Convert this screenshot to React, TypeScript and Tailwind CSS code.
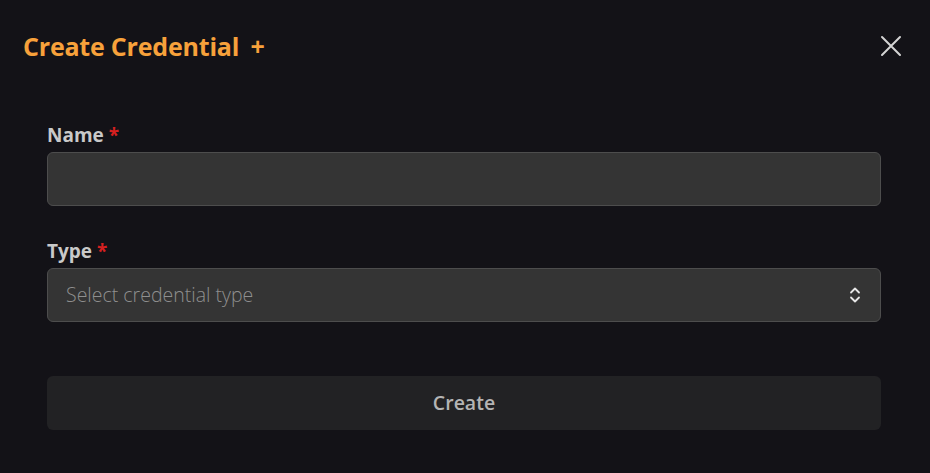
import React from "react";

export default function App() {
  return (
    <div
      className="w-[930px] h-[473px] bg-[#131217] overflow-hidden"
      style={{ fontFamily: '"Open Sans", "Noto Sans", sans-serif' }}
    >
      <div className="flex items-center justify-between pl-[23px] pr-[28px] pt-[28px] h-[64px]">
        <h2 className="text-[25px] font-bold text-[#f7a13b] leading-none tracking-[-0.2px]">
          Create Credential <span className="ml-[5px]">+</span>
        </h2>
        <button className="text-[#d4d4d4]">
          <svg width="22" height="22" viewBox="0 0 22 22" fill="none" stroke="currentColor" strokeWidth="2" strokeLinecap="round">
            <path d="M2 2L20 20M20 2L2 20" />
          </svg>
        </button>
      </div>

      <div className="pl-[47px] pr-[49px] pt-[59px] flex flex-col">
        <label className="text-[19px] font-bold text-[#c9c9c9] leading-[25px]">
          Name <span className="text-[#d62020]">*</span>
        </label>
        <input className="mt-[4px] h-[54px] w-full rounded-[6px] border border-[#4d4d4d] bg-[#343434] px-[18px] text-[18px] text-[#cfcfcf] outline-none" />

        <label className="mt-[33px] text-[19px] font-bold text-[#c9c9c9] leading-[25px]">
          Type <span className="text-[#d62020]">*</span>
        </label>
        <div className="mt-[4px] h-[54px] w-full rounded-[6px] border border-[#4d4d4d] bg-[#343434] pl-[18px] pr-[19px] flex items-center justify-between">
          <span className="text-[19.5px] text-[#8f8f8f] font-light">Select credential type</span>
          <svg width="12" height="18" viewBox="0 0 12 18" fill="none" stroke="#e6e6e6" strokeWidth="1.8" strokeLinecap="round" strokeLinejoin="round">
            <path d="M2 6.5L6 2.5L10 6.5M2 11.5L6 15.5L10 11.5" />
          </svg>
        </div>

        <button className="mt-[54px] h-[54px] w-full rounded-[6px] bg-[#222224] text-[19.5px] font-semibold text-[#b4b4b4]">
          Create
        </button>
      </div>
    </div>
  );
}
